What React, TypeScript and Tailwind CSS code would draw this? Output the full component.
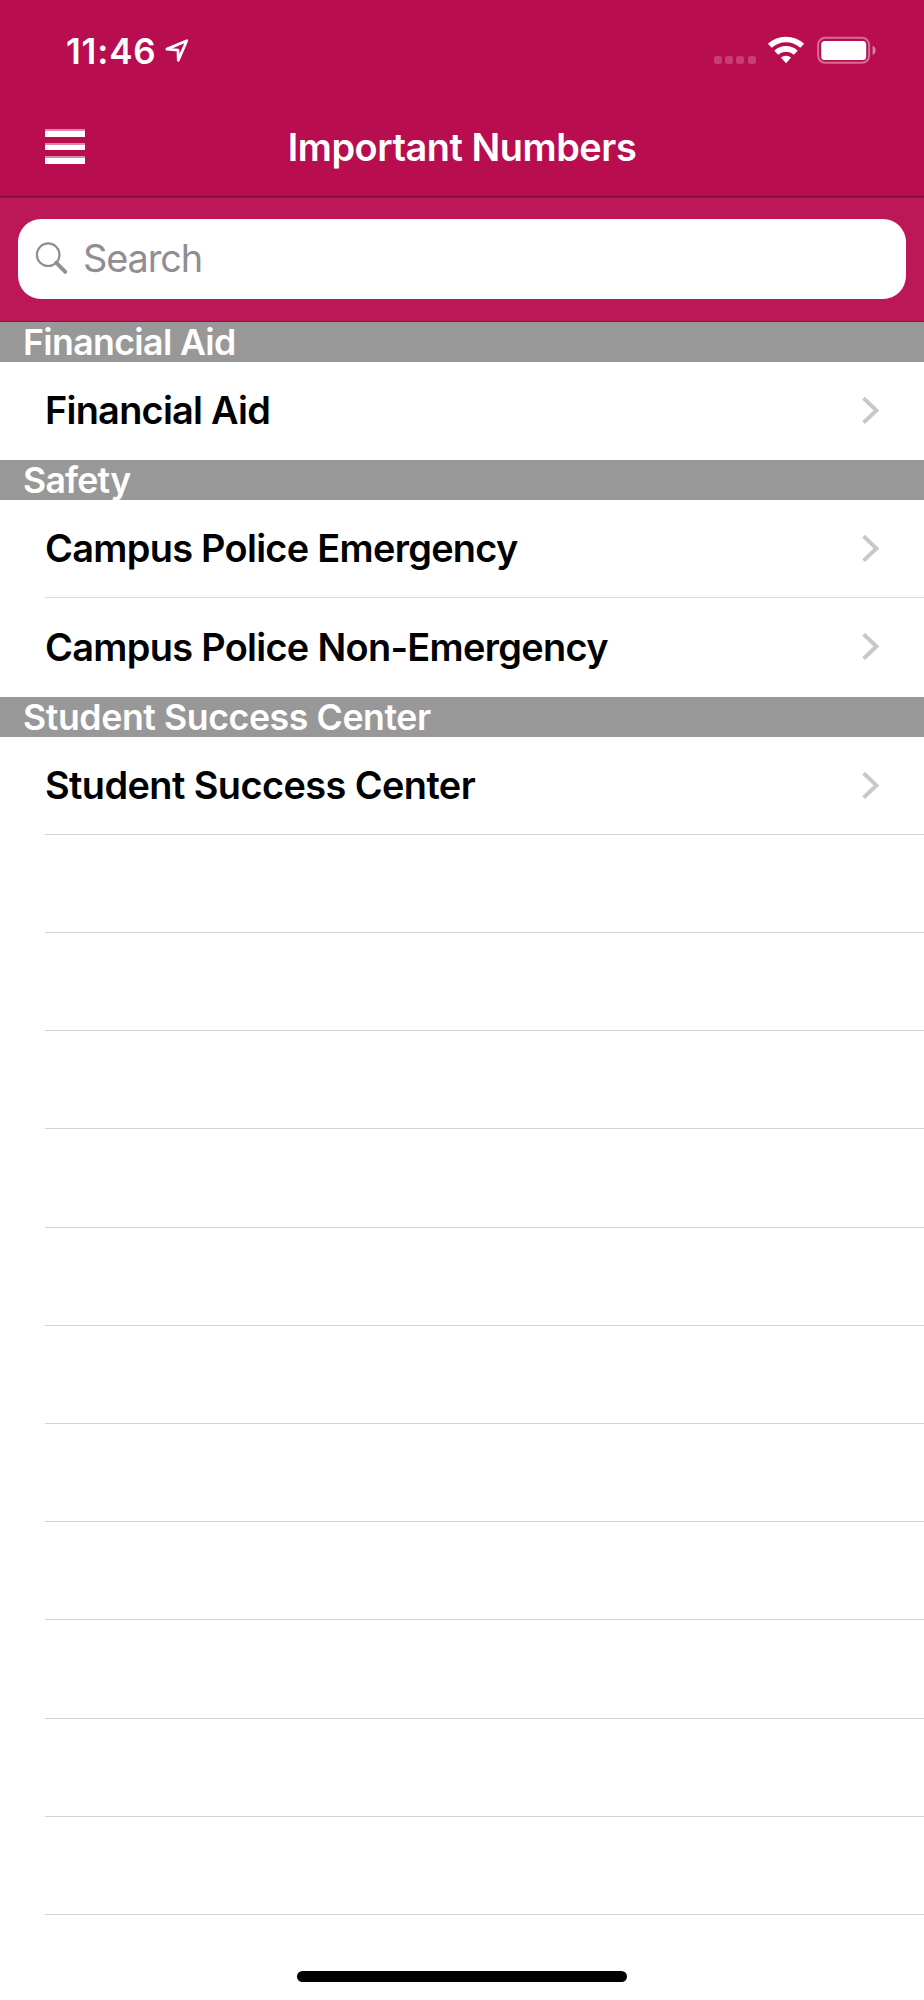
type Entry = { name: string; tracking: string };

const sections: { title: string; tracking: string; entries: Entry[] }[] = [
  {
    title: "Financial Aid",
    tracking: "tracking-[-0.65px]",
    entries: [{ name: "Financial Aid", tracking: "tracking-[-0.75px]" }],
  },
  {
    title: "Safety",
    tracking: "tracking-[-0.8px]",
    entries: [
      { name: "Campus Police Emergency", tracking: "tracking-[-0.7px]" },
      { name: "Campus Police Non-Emergency", tracking: "tracking-[-0.69px]" },
    ],
  },
  {
    title: "Student Success Center",
    tracking: "tracking-[-0.43px]",
    entries: [
      { name: "Student Success Center", tracking: "tracking-[-0.58px]" },
    ],
  },
];

const emptyRows = Array.from({ length: 11 }, (_, i) => i);

const StatusBar = () => {
  return (
    <div className="flex h-[101px] items-center justify-between pl-[66px] pr-[47px] text-white">
      <div className="flex items-center">
        <span className="pt-px text-[35px] font-semibold leading-none tracking-[0.8px]">
          11:46
        </span>
        <svg className="mb-px ml-[8px] h-[26px] w-[26px]" viewBox="0 0 26 26" fill="none">
          <path
            d="M2.9 12.1 L22.8 3.8 L14.3 23.3 L14 13.2 Z"
            stroke="currentColor"
            strokeWidth="2.8"
            strokeLinejoin="round"
          />
        </svg>
      </div>

      <div className="mb-[2px] flex h-[28px] items-end">
        {/* No signal */}
        <div className="flex gap-[3.2px]">
          <span className="h-[8px] w-[8px] rounded-[2.5px] bg-white/20" />
          <span className="h-[8px] w-[8px] rounded-[2.5px] bg-white/20" />
          <span className="h-[8px] w-[8px] rounded-[2.5px] bg-white/20" />
          <span className="h-[8px] w-[8px] rounded-[2.5px] bg-white/20" />
        </div>

        {/* Wifi */}
        <svg className="ml-[11.5px] h-[28px] w-[38px]" viewBox="0 0 38 28" fill="none">
          <path d="M2.8 9.8 A23.8 23.8 0 0 1 35.2 9.8" stroke="currentColor" strokeWidth="5.6" />
          <path d="M9.2 16.7 A14.4 14.4 0 0 1 28.8 16.7" stroke="currentColor" strokeWidth="5.6" />
          <path d="M19 27.2 L13.9 21.6 A7.6 7.6 0 0 1 24.1 21.6 Z" fill="currentColor" />
        </svg>

        {/* Battery */}
        <svg className="ml-[12px] h-[28px] w-[60px]" viewBox="0 0 60 28" fill="none">
          <rect x="1.1" y="1.8" width="51" height="25" rx="7" stroke="#fff" strokeOpacity="0.4" strokeWidth="2" />
          <rect x="4.2" y="5" width="45" height="19" rx="3.5" fill="#fff" />
          <path d="M55.6 9.8 C59.6 11.4 59.6 17.4 55.6 19 Z" fill="#fff" fillOpacity="0.5" />
        </svg>
      </div>
    </div>
  );
};

const MenuButton = () => {
  return (
    <button className="mb-px flex w-[40px] flex-col gap-[6px]">
      <span className="h-[7.5px] w-full border-t-2 border-[#d98aa9] bg-white" />
      <span className="h-[7.5px] w-full border-t-2 border-[#d98aa9] bg-white" />
      <span className="h-[7.5px] w-full border-t-2 border-[#d98aa9] bg-white" />
    </button>
  );
};

const App = () => {
  return (
    <div className="flex h-[2000px] w-[924px] flex-col overflow-hidden bg-white font-['Inter','Liberation_Sans',sans-serif]">
      {/* Header */}
      <header className="h-[197px] border-b border-[#7d0e3a] bg-[#b80e4f]">
        <StatusBar />
        <div className="grid h-[92px] grid-cols-[1fr_auto_1fr] items-center px-[45px]">
          <MenuButton />
          <h1 className="pt-[2px] text-[37.9px] font-semibold leading-none tracking-[-0.47px] text-white">
            Important Numbers
          </h1>
        </div>
      </header>

      {/* Search */}
      <div className="h-[124.6px] border-b border-t border-b-[#8f1244] border-t-[#a01147] bg-[#bc1757] px-[18px] pt-[21px]">
        <div className="flex h-[80px] items-center rounded-[23px] bg-white pl-[16px] text-[#8e8e93]">
          <svg className="h-[36px] w-[36px]" viewBox="0 0 36 36" fill="none" stroke="currentColor">
            <circle cx="14.2" cy="13.7" r="11.3" strokeWidth="2.2" />
            <path d="M22.2 21.7 L31.3 30.8" strokeWidth="3.8" strokeLinecap="round" />
          </svg>
          <span className="ml-[13px] pb-px text-[37.9px] leading-none tracking-[-1.1px]">
            Search
          </span>
        </div>
      </div>

      {/* Numbers */}
      <main>
        {sections.map((section) => (
          <section key={section.title}>
            <h2
              className={`flex h-[40.2px] items-center bg-[#989898] pl-[23px] pt-[1.5px] text-[35.7px] font-semibold leading-none text-white ${section.tracking}`}
            >
              {section.title}
            </h2>
            <ul className="pl-[45px]">
              {section.entries.map((entry, i) => {
                const inner = i < section.entries.length - 1;
                return (
                  <li
                    key={entry.name}
                    className={`flex h-[98.2px] items-center justify-between pr-[44px] ${
                      inner ? "border-b border-[#dcdcde]" : ""
                    }`}
                  >
                    <span
                      className={`pt-px text-[37.9px] font-semibold leading-none text-black ${entry.tracking}`}
                    >
                      {entry.name}
                    </span>
                    <svg className="h-[30px] w-[19px]" viewBox="0 0 19 30" fill="none">
                      <path d="M2.6 2.2 L15.4 14.4 L2.6 26.6" stroke="#c7c7cc" strokeWidth="4" />
                    </svg>
                  </li>
                );
              })}
            </ul>
          </section>
        ))}
        <div className="-mt-px pl-[45px]">
          {emptyRows.map((row) => (
            <div key={row} className="h-[98.2px] border-t border-[#d4d4d6]" />
          ))}
          <div className="border-t border-[#d4d4d6]" />
        </div>
      </main>

      {/* Home indicator */}
      <div className="mx-auto mb-[18px] mt-auto h-[11px] w-[330px] rounded-full bg-black" />
    </div>
  );
};

export default App;
